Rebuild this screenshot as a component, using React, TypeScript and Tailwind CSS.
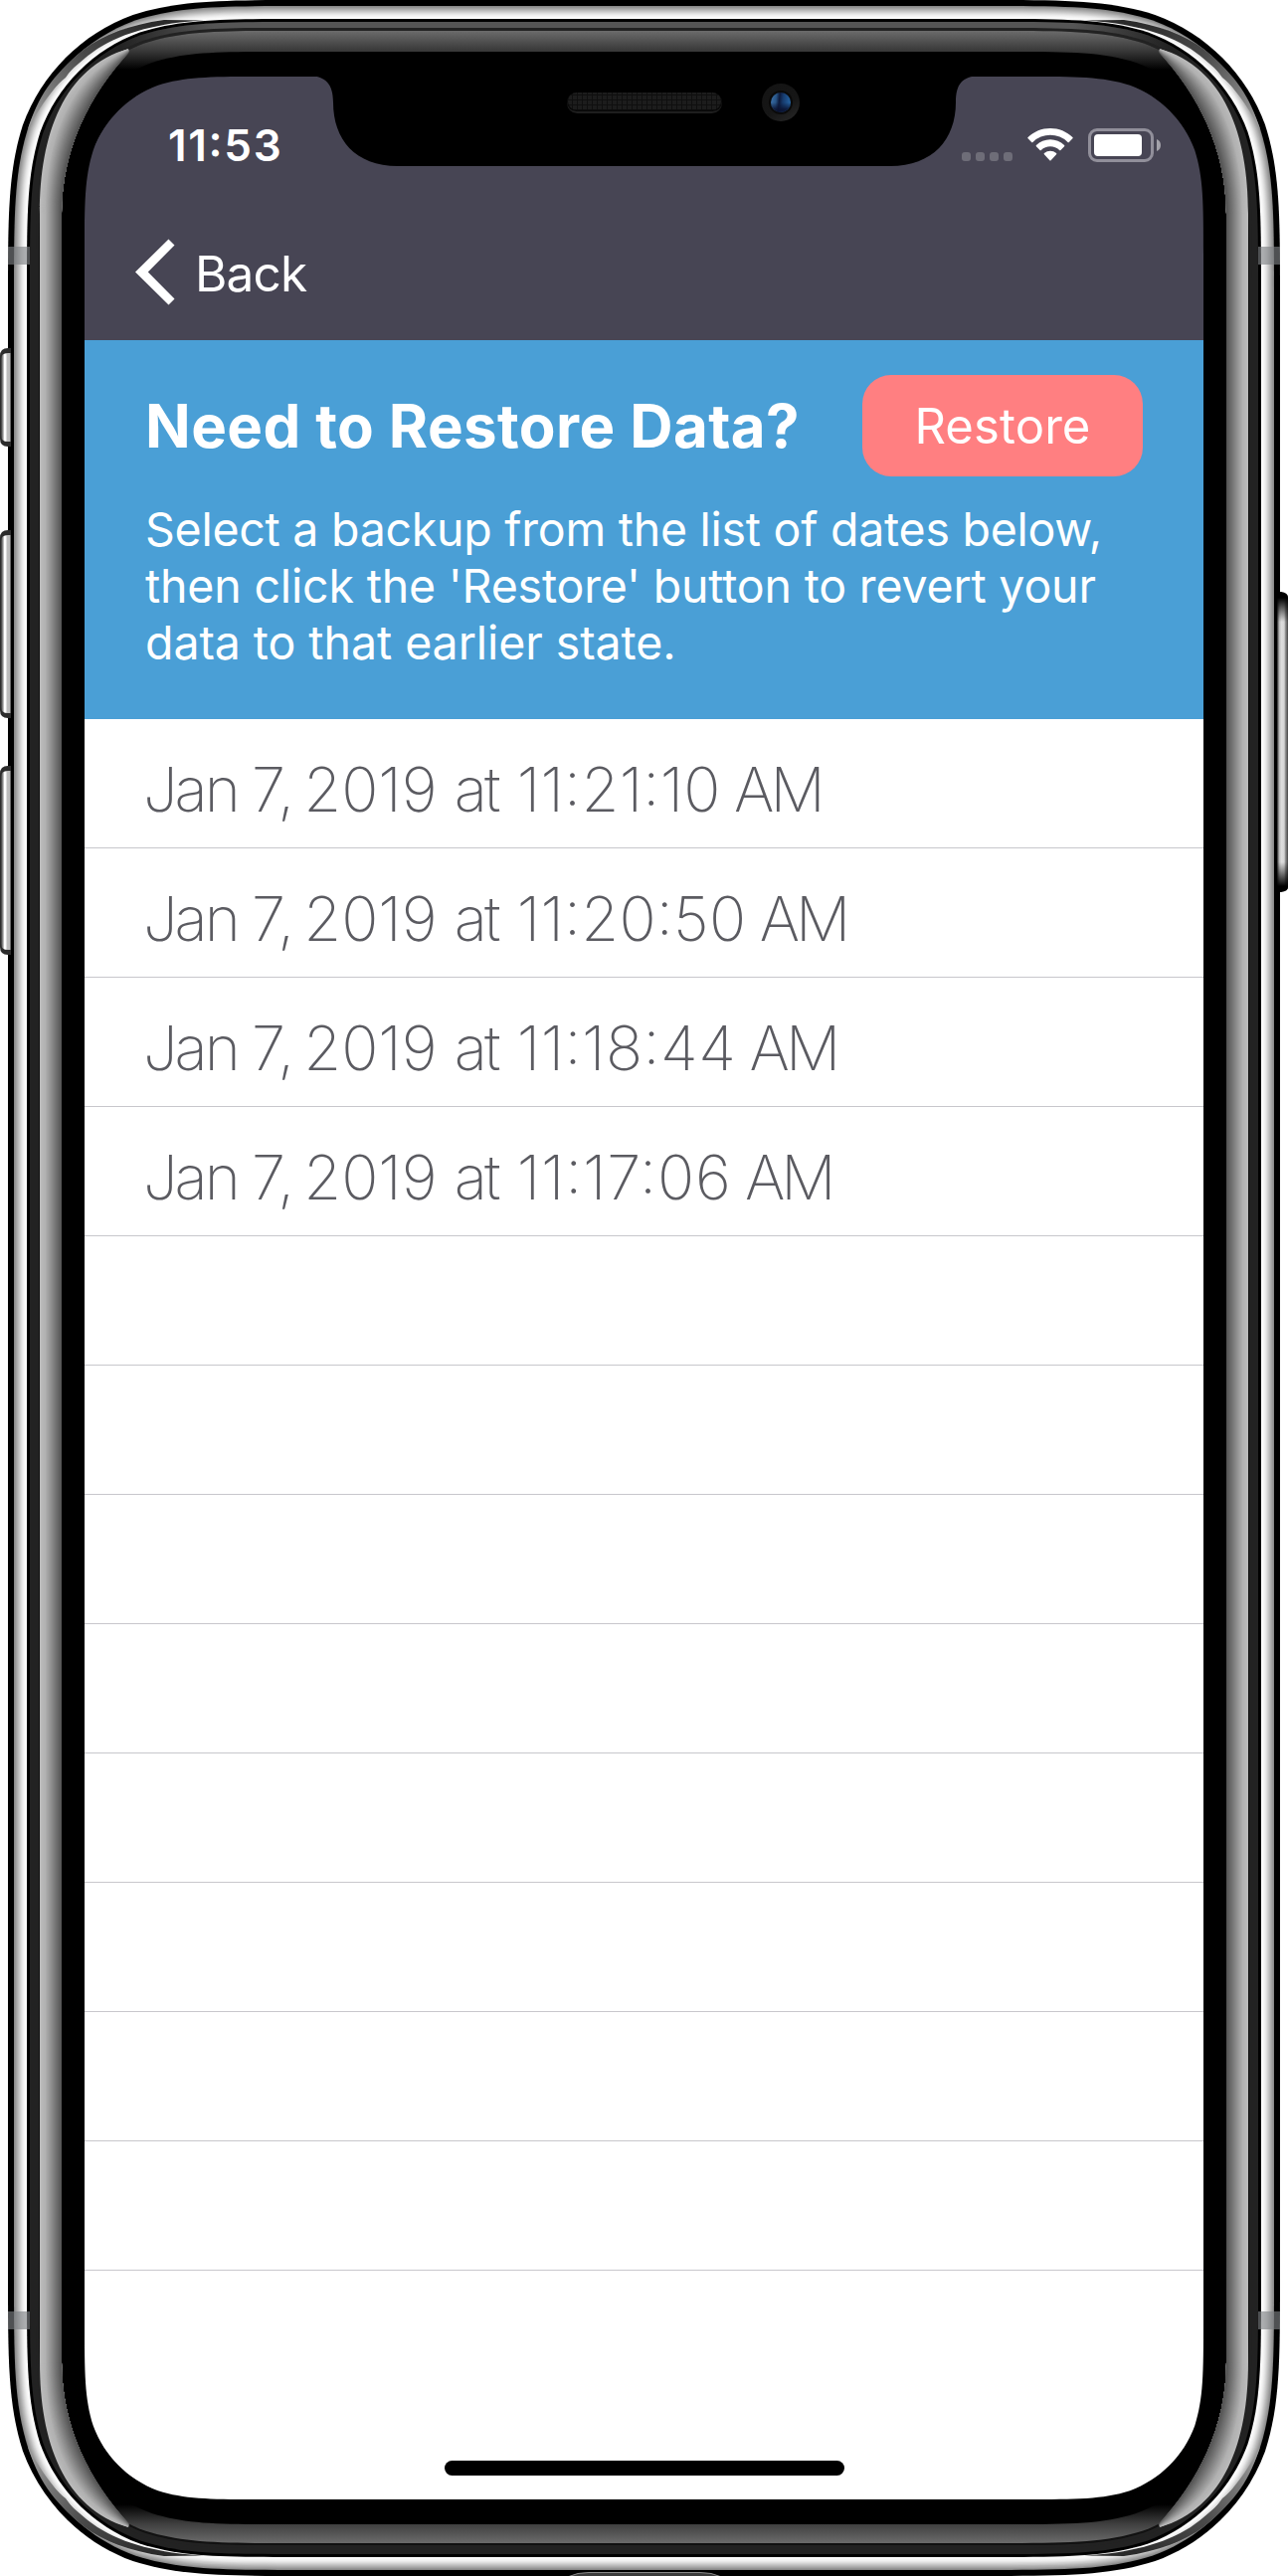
import type { ReactNode } from 'react';

/* ---------- geometry helpers ---------- */

const n = (v: number) => Math.round(v * 100) / 100;

/** Rounded rectangle with continuous-curvature corners. */
function squircle(x: number, y: number, w: number, h: number, r: number) {
  const a = 1.52866 * r, b = 1.08849 * r, c = 0.86841 * r, d = 0.63149 * r;
  const e = 0.07491 * r, f = 0.37282 * r, g = 0.16906 * r;
  const R = x + w, B = y + h;
  const p = (...v: number[]) => v.map(n).join(' ');
  return [
    `M${p(x + a, y)}`,
    `L${p(R - a, y)}`,
    `C${p(R - b, y, R - c, y, R - d, y + e)}`,
    `C${p(R - f, y + g, R - g, y + f, R - e, y + d)}`,
    `C${p(R, y + c, R, y + b, R, y + a)}`,
    `L${p(R, B - a)}`,
    `C${p(R, B - b, R, B - c, R - e, B - d)}`,
    `C${p(R - g, B - f, R - f, B - g, R - d, B - e)}`,
    `C${p(R - c, B, R - b, B, R - a, B)}`,
    `L${p(x + a, B)}`,
    `C${p(x + b, B, x + c, B, x + d, B - e)}`,
    `C${p(x + f, B - g, x + g, B - f, x + e, B - d)}`,
    `C${p(x, B - c, x, B - b, x, B - a)}`,
    `L${p(x, y + a)}`,
    `C${p(x, y + b, x, y + c, x + e, y + d)}`,
    `C${p(x + g, y + f, x + f, y + g, x + d, y + e)}`,
    `C${p(x + c, y, x + b, y, x + a, y)}Z`,
  ].join('');
}

/** Body outline inset by k on every side. */
const ring = (k: number) => squircle(8 + k, k, 1279 - 2 * k, 2590 - 2 * k, 199 - k);

const grey = (v: number) => `rgb(${Math.round(v)},${Math.round(v)},${Math.round(v)})`;
const mix = (a: number, b: number, t: number) => a + (b - a) * t;

const STEEL = [138, 150, 162, 174, 186, 198, 210, 222, 232, 240, 246, 250, 252];

/** Reflection that runs down the left edge of the glass. */
function sideBand(t: number) {
  const o = [40, 215, 40, 135, 64, 68, 129, 49];
  const i = [62, 215, 62, 150, 90, 95, 131, 52];
  const [x0, y0, x1, y1, x2, y2, x3, y3] = o.map((v, k) => n(mix(v, i[k], t)));
  return `M${x0} 1295L${x0} ${y0}C${x1} ${y1} ${x2} ${y2} ${x3} ${y3}C90 95 62 150 62 215L62 1295Z`;
}

const BAND_STEPS = 22;

function CornerShine() {
  return (
    <g>
      <path d="M28 130C38 98 52 76 84 50C104 35 130 25 165 20L205 20.5C160 23 125 32 98 49C72 67 48 92 28 130Z" fill="url(#sweep)" />
      <path d="M130 27C100 38 82 55 66 78C58 84 48 95 34 116C48 82 76 46 130 27Z" fill="url(#sweep)" />
      {Array.from({ length: BAND_STEPS }, (_, i) => (
        <path key={i} d={sideBand(i / BAND_STEPS)} fill={grey(i < 5 ? 187 - i * 2 : mix(178, 84, (i - 5) / 16))} />
      ))}
    </g>
  );
}

function PhoneBody() {
  return (
    <svg className="absolute inset-0" width="1295" height="2590" viewBox="0 0 1295 2590" aria-hidden="true">
      <defs>
        <linearGradient id="sweep" gradientUnits="userSpaceOnUse" x1="150" y1="20" x2="30" y2="130">
          <stop offset="0" stopColor="#2b2b2b" />
          <stop offset="0.45" stopColor="#4a4a4a" />
          <stop offset="1" stopColor="#a0a0a0" />
        </linearGradient>
        <linearGradient id="rimTop" gradientUnits="userSpaceOnUse" x1="120" y1="0" x2="1175" y2="0">
          <stop offset="0" stopColor="#222" />
          <stop offset="0.09" stopColor="#555" />
          <stop offset="0.91" stopColor="#555" />
          <stop offset="1" stopColor="#222" />
        </linearGradient>
        <linearGradient id="glassTop" gradientUnits="userSpaceOnUse" x1="0" y1="31" x2="0" y2="70">
          <stop offset="0" stopColor="#6b6b6b" />
          <stop offset="0.5" stopColor="#3a3a3a" />
          <stop offset="1" stopColor="#000" />
        </linearGradient>
        <linearGradient id="glassBottom" gradientUnits="userSpaceOnUse" x1="0" y1="2557" x2="0" y2="2518">
          <stop offset="0" stopColor="#6b6b6b" />
          <stop offset="0.5" stopColor="#3f3f3f" />
          <stop offset="1" stopColor="#000" />
        </linearGradient>
        <linearGradient id="keyLeft" x1="0" y1="0" x2="1" y2="0">
          <stop offset="0" stopColor="#333" />
          <stop offset="0.2" stopColor="#999" />
          <stop offset="0.35" stopColor="#fff" />
          <stop offset="0.52" stopColor="#fafafa" />
          <stop offset="0.58" stopColor="#bdbdbd" />
          <stop offset="0.85" stopColor="#bbb" />
          <stop offset="1" stopColor="#444" />
        </linearGradient>
        <linearGradient id="keyRight" x1="0" y1="0" x2="1" y2="0">
          <stop offset="0" stopColor="#222" />
          <stop offset="0.2" stopColor="#bbb" />
          <stop offset="0.4" stopColor="#ddd" />
          <stop offset="0.65" stopColor="#d6d6d6" />
          <stop offset="0.75" stopColor="#999" />
          <stop offset="1" stopColor="#444" />
        </linearGradient>
        <linearGradient id="keyEnds" gradientUnits="userSpaceOnUse" x1="0" y1="595" x2="0" y2="897">
          <stop offset="0" stopColor="#000" />
          <stop offset="0.02" stopColor="#000" />
          <stop offset="0.1" stopColor="#000" stopOpacity="0" />
          <stop offset="0.9" stopColor="#000" stopOpacity="0" />
          <stop offset="0.98" stopColor="#000" />
          <stop offset="1" stopColor="#000" />
        </linearGradient>
        <clipPath id="upper"><rect x="0" y="0" width="1295" height="110" /></clipPath>
        <clipPath id="lower"><rect x="0" y="2480" width="1295" height="110" /></clipPath>
      </defs>

      <path d={ring(0)} fill="#000" />
      {STEEL.map((v, i) => (
        <path key={i} d={ring(6 + i)} fill={grey(v)} />
      ))}
      <path d={ring(19)} fill="#000" />
      <path d={ring(22)} fill="#222" />
      <path d={ring(22)} fill="url(#rimTop)" clipPath="url(#upper)" />
      <path d={ring(28)} fill="#222" />
      <path d={ring(31)} fill="#111" />
      <path d={ring(31)} fill="url(#glassTop)" clipPath="url(#upper)" />
      <path d={ring(33)} fill="url(#glassBottom)" clipPath="url(#lower)" />
      <path d={ring(52)} fill="#000" />

      <CornerShine />
      <g transform="translate(1295 0) scale(-1 1)"><CornerShine /></g>
      <g transform="translate(0 2590) scale(1 -1)"><CornerShine /></g>
      <g transform="translate(1295 2590) scale(-1 -1)"><CornerShine /></g>

      {/* antenna lines */}
      <g fill="#7d8184" fillOpacity="0.63">
        <rect x="8" y="248" width="22" height="18" />
        <rect x="1265" y="248" width="22" height="18" />
        <rect x="8" y="2324" width="22" height="18" />
        <rect x="1265" y="2324" width="22" height="18" />
      </g>

      {/* mute switch and volume keys */}
      {[[350, 99], [533, 189], [770, 190]].map(([y, h]) => (
        <g key={y}>
          <path d={`M11 ${y}H8Q0 ${y} 0 ${y + 8}V${y + h - 8}Q0 ${y + h} 8 ${y + h}H11Z`} fill="#2c2c2c" />
          <path d={`M11 ${y + 5}H8Q1 ${y + 5} 1 ${y + 11}V${y + h - 11}Q1 ${y + h - 5} 8 ${y + h - 5}H11Z`} fill="url(#keyLeft)" />
        </g>
      ))}

      {/* side key */}
      <path d="M1284 595H1288Q1295 596 1295 601V892Q1295 896 1288 897H1284Z" fill="url(#keyRight)" />
      <path d="M1284 595H1288Q1295 596 1295 601V892Q1295 896 1288 897H1284Z" fill="url(#keyEnds)" />

      {/* connector */}
      <path d="M572 2590.5Q580 2586.5 592 2586.5H704Q716 2586.5 724 2590.5Z" fill="#3c3c3c" stroke="#8a8a8a" strokeWidth="1" />
    </svg>
  );
}

function Bezel() {
  const cutout = squircle(85, 77, 1125, 2436, 117);
  const edge = squircle(79, 71, 1137, 2448, 123);
  return (
    <svg className="pointer-events-none absolute inset-0" width="1295" height="2590" viewBox="0 0 1295 2590" aria-hidden="true">
      <defs>
        <pattern id="mesh" width="5" height="5" patternUnits="userSpaceOnUse">
          <rect width="5" height="5" fill="#1c1c1c" />
          <path d="M0 0.5H5M0.5 0V5" stroke="#0f0f0f" />
        </pattern>
        <linearGradient id="ringShade" x1="0.2" y1="0" x2="0.8" y2="1">
          <stop offset="0" stopColor="#141414" />
          <stop offset="0.6" stopColor="#161616" />
          <stop offset="1" stopColor="#262626" />
        </linearGradient>
        <linearGradient id="lens" x1="0" y1="0.4" x2="1" y2="0.5">
          <stop offset="0" stopColor="#3a6ea5" />
          <stop offset="0.25" stopColor="#285587" />
          <stop offset="0.42" stopColor="#0d1a3c" />
          <stop offset="0.6" stopColor="#163a6c" />
          <stop offset="1" stopColor="#2565a5" />
        </linearGradient>
        <linearGradient id="lensShade" x1="0" y1="0" x2="0" y2="1">
          <stop offset="0.5" stopColor="#0a1230" stopOpacity="0" />
          <stop offset="0.85" stopColor="#0a1230" stopOpacity="0.9" />
        </linearGradient>
      </defs>
      <path d={`${edge}${cutout}`} fill="#000" fillRule="evenodd" />
      <path
        d="M312 76C327 77 335 84 335 103C335 140 357 167 400 167H895C938 167 961 140 961 103C961 84 968 77 984 76Z"
        fill="#000"
      />
      <rect x="570" y="93" width="156" height="21" rx="10.5" fill="#1e1e1e" />
      <rect x="570" y="93" width="156" height="19" rx="9.5" fill="#080808" />
      <rect x="571" y="93" width="154" height="17.5" rx="8.7" fill="url(#mesh)" />
      <circle cx="785" cy="103" r="19" fill="url(#ringShade)" />
      <circle cx="785" cy="103" r="12" fill="#0a0a0a" />
      <circle cx="785" cy="103" r="10" fill="url(#lens)" />
      <circle cx="785" cy="103" r="10" fill="url(#lensShade)" />
    </svg>
  );
}

/* ---------- screen ---------- */

function StatusIcons() {
  return (
    <div className="flex h-[34px] items-end">
      <div className="mb-px flex gap-[5px]">
        {[0, 1, 2, 3].map((i) => (
          <span key={i} className="size-[9px] rounded-[3px] bg-[#6e6d78]" />
        ))}
      </div>
      <svg className="mb-px ml-[15px]" width="46" height="33" viewBox="0 0 46 33" fill="#fff" aria-label="Wi-Fi">
        <path d="M23 0C14.5 0 6.5 3.3 0.6 9.1Q0 9.7 0.6 10.3L4.2 13.9Q4.8 14.5 5.4 13.9A25.2 25.2 0 0 1 40.6 13.9Q41.2 14.5 41.8 13.9L45.4 10.3Q46 9.7 45.4 9.1C39.5 3.3 31.5 0 23 0Z" />
        <path d="M23 11.3C17.6 11.3 12.7 13.4 8.9 17Q8.3 17.6 8.9 18.2L12.6 21.9Q13.2 22.5 13.8 21.9A13.7 13.7 0 0 1 32.2 21.9Q32.8 22.5 33.4 21.9L37.1 18.2Q37.7 17.6 37.1 17C33.3 13.4 28.4 11.3 23 11.3Z" />
        <path d="M23 22.8Q19.7 22.8 16.9 25.1Q16.3 25.7 16.9 26.3L22.4 32.2Q23 32.8 23.6 32.2L29.1 26.3Q29.7 25.7 29.1 25.1Q26.3 22.8 23 22.8Z" />
      </svg>
      <svg className="ml-[15px]" width="73" height="34" viewBox="0 0 73 34" aria-label="Battery">
        <rect x="1.5" y="1.5" width="63" height="31" rx="7.5" fill="none" stroke="#918f9a" strokeWidth="3" />
        <rect x="6" y="6" width="48" height="22" rx="4" fill="#fff" />
        <path d="M69 11C71.7 12 73 14.3 73 17C73 19.7 71.7 22 69 23Z" fill="#a3a2aa" />
      </svg>
    </div>
  );
}

function StatusBar() {
  return (
    <header className="flex h-[132px] shrink-0 justify-between pl-[84px] pr-[43px]">
      <time className="mt-[47px] text-[44px] font-semibold leading-[44px] tracking-[1.7px]">11:53</time>
      <div className="mt-[52px]">
        <StatusIcons />
      </div>
    </header>
  );
}

function NavBar() {
  return (
    <nav className="flex h-[133px] shrink-0 items-start pl-[50px]">
      <button className="flex items-start">
        <svg className="mt-[31px]" width="41" height="67" viewBox="0 0 41 67" fill="#fff" aria-hidden="true">
          <path d="M34.5 0.5L40.5 6.5L13.8 33.5L40.5 60.5L34.5 66.5L1 33.5Z" />
        </svg>
        <span className="ml-[20px] mt-[41px] text-[49.5px] leading-[50px] tracking-[-0.8px]">Back</span>
      </button>
    </nav>
  );
}

function RestorePanel() {
  return (
    <section className="h-[381px] shrink-0 bg-[#4a9fd6] pl-[61px] pr-[61px] pt-[35px]">
      <div className="flex items-center justify-between">
        <h1 className="whitespace-nowrap text-[60px] font-bold leading-[60px] tracking-[0.4px]">Need to Restore Data?</h1>
        <button className="h-[102px] w-[282px] rounded-[29px] bg-[#ff7f81] pt-[2px] text-[49px] leading-[50px] tracking-[0.1px]">
          Restore
        </button>
      </div>
      <p className="mt-[25px] whitespace-nowrap text-[46.5px] leading-[57px]">
        <span className="tracking-[-0.26px]">Select a backup from the list of dates below,</span>
        <br />
        <span className="tracking-[-0.18px]">then click the 'Restore' button to revert your</span>
        <br />
        <span className="tracking-[-0.07px]">data to that earlier state.</span>
      </p>
    </section>
  );
}

const BACKUPS = [
  { time: '11:21:10', tracking: 'tracking-[0.3px]' },
  { time: '11:20:50', tracking: 'tracking-[0.25px]' },
  { time: '11:18:44', tracking: 'tracking-[0.5px]' },
  { time: '11:17:06', tracking: 'tracking-[0.85px]' },
];

const TOTAL_ROWS = 12;

function Row({ children }: { children?: ReactNode }) {
  return <li className="h-[130px] shrink-0 border-b border-[#c8c7cc] pl-[59px] pt-[41px]">{children}</li>;
}

function BackupList() {
  return (
    <ul className="flex flex-1 flex-col bg-white text-[61.5px] font-extralight leading-[60px] text-[#5b5b61]">
      {BACKUPS.map(({ time, tracking }) => (
        <Row key={time}>
          <p className="whitespace-nowrap">
            <span className="tracking-[-3px]">Jan</span>
            <span className="[word-spacing:-3px]"> </span>7,
            <span className="[word-spacing:-8.5px]"> </span>
            2019 <span className="tracking-[-3px]">at</span>
            <span className="[word-spacing:2px]"> </span>
            <span className={tracking}>{time}</span>
            <span className="[word-spacing:-4px]"> </span>
            <span className="tracking-[-4px]">AM</span>
          </p>
        </Row>
      ))}
      {Array.from({ length: TOTAL_ROWS - BACKUPS.length }, (_, i) => (
        <Row key={i} />
      ))}
      <li className="mt-auto flex justify-center pb-[24px]">
        <span className="h-[15px] w-[402px] rounded-full bg-black" />
      </li>
    </ul>
  );
}

export default function App() {
  return (
    <div className="relative h-[2590px] w-[1295px] overflow-hidden bg-white pl-[85px] pt-[77px] font-['Inter',sans-serif] [font-feature-settings:'calt'_1]">
      <PhoneBody />
      <main className="relative flex h-[2436px] w-[1125px] flex-col overflow-hidden rounded-[116px] bg-[#474554] text-white">
        <StatusBar />
        <NavBar />
        <RestorePanel />
        <BackupList />
      </main>
      <Bezel />
    </div>
  );
}
